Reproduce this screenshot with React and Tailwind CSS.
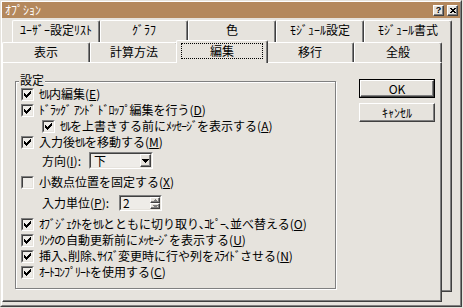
import React from 'react'

// Excel "オプション" dialog, 編集 tab (classic Windows look)

const KANA = /([\uFF61-\uFF9F]+)/

// half-width kana runs are set a little tighter, like the old bitmap font
function Kana({ text }) {
  return text.split(KANA).map((part, i) =>
    i % 2 === 1
      ? <span key={i} className="tracking-[-1px]">{part}</span>
      : <React.Fragment key={i}>{part}</React.Fragment>
  )
}

function Label({ text, mn, colon }) {
  return (
    <span className="whitespace-nowrap">
      <Kana text={text} />(<span className="underline underline-offset-[1px]">{mn}</span>){colon && ':'}
    </span>
  )
}

function CheckMark() {
  const tops = [2, 3, 4, 3, 2, 1, 0]
  return (
    <svg width="7" height="7" viewBox="0 0 7 7" shapeRendering="crispEdges">
      {tops.map((y, x) => <rect key={x} x={x} y={y} width="1" height="3" fill="#000" />)}
    </svg>
  )
}

function Check({ checked }) {
  return (
    <div className="w-[13px] h-[13px] shrink-0 border border-t-[#808080] border-l-[#808080] border-r-white border-b-white">
      <div className="w-full h-full flex items-center justify-center bg-[#EEECE8] border border-t-[#404040] border-l-[#404040] border-r-[#E6E3DD] border-b-[#E6E3DD]">
        {checked && <CheckMark />}
      </div>
    </div>
  )
}

function CheckRow({ checked = true, indent, className = '', children }) {
  return (
    <div className={`h-4 flex items-center gap-[5px] ${indent ? 'ml-[21px]' : ''} ${className}`}>
      <Check checked={checked} />
      {children}
    </div>
  )
}

function ArrowDown() {
  return (
    <svg width="7" height="4" viewBox="0 0 7 4" shapeRendering="crispEdges">
      <rect x="0" y="0" width="7" height="1" fill="#000" />
      <rect x="1" y="1" width="5" height="1" fill="#000" />
      <rect x="2" y="2" width="3" height="1" fill="#000" />
      <rect x="3" y="3" width="1" height="1" fill="#000" />
    </svg>
  )
}

function SmallArrow({ up }) {
  return (
    <svg width="5" height="3" viewBox="0 0 5 3" shapeRendering="crispEdges">
      {up ? (
        <>
          <rect x="2" y="0" width="1" height="1" fill="#808080" />
          <rect x="1" y="1" width="3" height="1" fill="#808080" />
          <rect x="0" y="2" width="5" height="1" fill="#808080" />
        </>
      ) : (
        <>
          <rect x="0" y="0" width="5" height="1" fill="#808080" />
          <rect x="1" y="1" width="3" height="1" fill="#808080" />
          <rect x="2" y="2" width="1" height="1" fill="#808080" />
        </>
      )}
    </svg>
  )
}

const sunken = 'border border-t-[#808080] border-l-[#808080] border-r-white border-b-white'
const sunkenInner = 'border border-t-[#404040] border-l-[#404040] border-r-[#E6E3DD] border-b-[#E6E3DD]'
const raised = 'border border-t-white border-l-white border-r-[#404040] border-b-[#404040] shadow-[inset_-1px_-1px_0_#808080]'

function Combo() {
  return (
    <div className={`w-[64px] h-[17px] ${sunken}`}>
      <div className={`w-full h-full flex items-center bg-[#EEECE8] ${sunkenInner}`}>
        <span className="flex-1 pl-[3px]">下</span>
        <div className={`w-[11px] h-full flex items-center justify-center bg-[#E6E3DD] ${raised}`}>
          <ArrowDown />
        </div>
      </div>
    </div>
  )
}

function Spin() {
  return (
    <div className={`w-[43px] h-[16px] ${sunken}`}>
      <div className={`w-full h-full flex bg-[#EEECE8] ${sunkenInner}`}>
        <span className="flex-1 pl-[2px] flex items-center">2</span>
        <div className="w-[10px] flex flex-col">
          <div className={`flex-1 flex items-center justify-center bg-[#E6E3DD] ${raised}`}>
            <SmallArrow up />
          </div>
          <div className={`flex-1 flex items-center justify-center bg-[#E6E3DD] ${raised}`}>
            <SmallArrow />
          </div>
        </div>
      </div>
    </div>
  )
}

const tabBase = 'border-t border-l border-t-white border-l-white border-r border-r-[#404040] shadow-[inset_-1px_0_0_#808080] rounded-tl-[2px] rounded-tr-[2px] text-center'

function BackTab({ text }) {
  return <div className={`w-[88px] h-[22px] pt-[3px] ${tabBase}`}>{text}</div>
}

function FrontTab({ text }) {
  return <div className={`w-[88px] h-[20px] pt-[3px] ${tabBase}`}>{text}</div>
}

function SelectedTab({ text }) {
  return (
    <div className={`relative z-10 -mt-[2px] -mx-[2px] w-[92px] h-[23px] bg-[#E6E3DD] ${tabBase}`}>
      <div className="mx-auto mt-[2px] w-[82px] h-[16px] border border-dotted border-black flex items-center justify-center">
        {text}
      </div>
    </div>
  )
}

function CaptionButton({ children }) {
  return (
    <div className={`w-[11px] h-[11px] bg-[#E6E3DD] flex items-center justify-center ${raised}`}>
      {children}
    </div>
  )
}

function TitleBar() {
  return (
    <div className="h-[16px] bg-[#B4885C] flex items-center pl-[3px] pr-[2px]">
      <span className="text-white">ｵﾌﾟｼｮﾝ</span>
      <div className="ml-auto flex gap-[3px]">
        <CaptionButton>
          <span className="text-[9px] leading-[9px] font-bold font-['Liberation_Sans',sans-serif]">?</span>
        </CaptionButton>
        <CaptionButton>
          <svg width="6" height="5" viewBox="0 0 6 5" shapeRendering="crispEdges">
            <rect x="0" y="0" width="2" height="1" fill="#000" />
            <rect x="4" y="0" width="2" height="1" fill="#000" />
            <rect x="1" y="1" width="4" height="1" fill="#000" />
            <rect x="2" y="2" width="2" height="1" fill="#000" />
            <rect x="1" y="3" width="4" height="1" fill="#000" />
            <rect x="0" y="4" width="2" height="1" fill="#000" />
            <rect x="4" y="4" width="2" height="1" fill="#000" />
          </svg>
        </CaptionButton>
      </div>
    </div>
  )
}

function EditPanel() {
  return (
    <div className="h-[240px] border-t border-l border-t-white border-l-white border-r border-b border-r-[#404040] border-b-[#404040] shadow-[inset_-1px_-1px_0_#808080] flex items-start">
      {/* 設定 group */}
      <div className="relative ml-[12px] mt-[18px] w-[321px] h-[208px] border border-[#808080] shadow-[inset_1px_1px_0_#fff,1px_1px_0_#fff] pt-[4px] pl-[5px]">
        <span className="absolute left-[3px] -top-[8px] px-[1px] leading-[12px] bg-[#E6E3DD]">設定</span>

        <CheckRow><Label text="ｾﾙ内編集" mn="E" /></CheckRow>
        <CheckRow><Label text="ﾄﾞﾗｯｸﾞ ｱﾝﾄﾞ ﾄﾞﾛｯﾌﾟ編集を行う" mn="D" /></CheckRow>
        <CheckRow indent><Label text="ｾﾙを上書きする前にﾒｯｾｰｼﾞを表示する" mn="A" /></CheckRow>
        <CheckRow><Label text="入力後ｾﾙを移動する" mn="M" /></CheckRow>

        <div className="mt-[2px] ml-[21px] h-[17px] flex items-center">
          <span className="w-[47px]"><Label text="方向" mn="I" colon /></span>
          <Combo />
        </div>

        <CheckRow checked={false} className="mt-[5px]"><Label text="小数点位置を固定する" mn="X" /></CheckRow>

        <div className="mt-[5px] ml-[21px] h-[16px] flex items-center">
          <span className="w-[77px]"><Label text="入力単位" mn="P" colon /></span>
          <Spin />
        </div>

        <CheckRow className="mt-[5px]"><Label text="ｵﾌﾞｼﾞｪｸﾄをｾﾙとともに切り取り､ｺﾋﾟｰ､並べ替える" mn="O" /></CheckRow>
        <CheckRow><Label text="ﾘﾝｸの自動更新前にﾒｯｾｰｼﾞを表示する" mn="U" /></CheckRow>
        <CheckRow><Label text="挿入､削除､ｻｲｽﾞ変更時に行や列をｽﾗｲﾄﾞさせる" mn="N" /></CheckRow>
        <CheckRow><Label text="ｵｰﾄｺﾝﾌﾟﾘｰﾄを使用する" mn="C" /></CheckRow>
      </div>

      {/* OK / キャンセル */}
      <div className="ml-[23px] mt-[16px] w-[76px] flex flex-col gap-[5px]">
        <div className="h-[19px] border border-black">
          <div className={`h-full flex items-center justify-center ${raised}`}>OK</div>
        </div>
        <div className={`h-[19px] flex items-center justify-center ${raised}`}>ｷｬﾝｾﾙ</div>
      </div>
    </div>
  )
}

export default function App() {
  return (
    <div className="w-[463px] h-[308px] bg-[#E6E3DD] text-black text-[12px] leading-[12px] font-['Noto_Sans_CJK_JP','Noto_Sans',sans-serif]">
      <div className="w-[462px] h-[307px] border border-t-[#E6E3DD] border-l-[#E6E3DD] border-r-[#404040] border-b-[#404040]">
        <div className="h-full border border-t-white border-l-white border-r-[#808080] border-b-[#808080] flex flex-col">
          <TitleBar />

          <div className="mt-[2px] w-[450px] flex flex-col">
            {/* back row of tabs */}
            <div className="pl-[10px] flex">
              <BackTab text="ﾕｰｻﾞｰ設定ﾘｽﾄ" />
              <BackTab text="ｸﾞﾗﾌ" />
              <BackTab text="色" />
              <BackTab text="ﾓｼﾞｭｰﾙ設定" />
              <BackTab text="ﾓｼﾞｭｰﾙ書式" />
            </div>

            <div className="flex">
              <div className="w-[440px] flex flex-col">
                {/* front row of tabs */}
                <div className="h-[20px] flex items-start">
                  <FrontTab text="表示" />
                  <FrontTab text="計算方法" />
                  <SelectedTab text="編集" />
                  <FrontTab text="移行" />
                  <FrontTab text="全般" />
                </div>
                <EditPanel />
              </div>
              {/* right edge of the back row's page */}
              <div className="w-[10px] h-[250px] border-r border-b border-r-[#404040] border-b-[#404040] shadow-[inset_-1px_-1px_0_#808080]" />
            </div>
          </div>
        </div>
      </div>
    </div>
  )
}
